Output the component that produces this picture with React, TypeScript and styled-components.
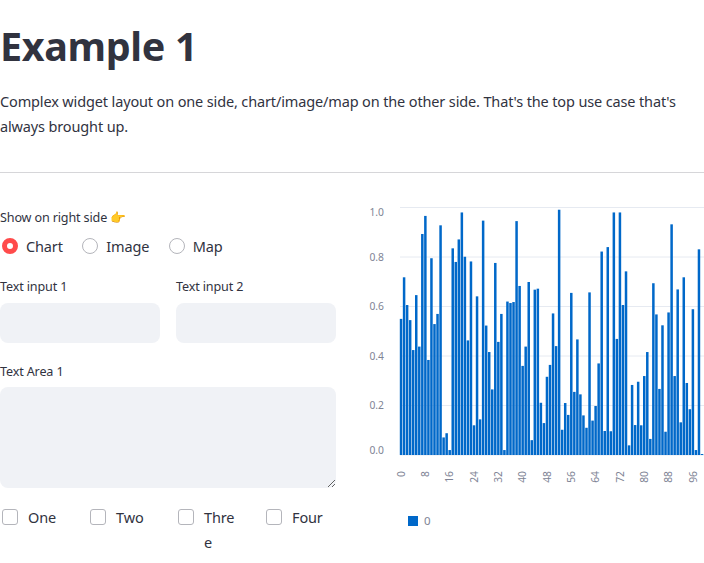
import React from "react";
import styled, { createGlobalStyle } from "styled-components";

const GlobalStyle = createGlobalStyle`
  html, body {
    margin: 0;
    padding: 0;
    background: #ffffff;
    overflow: hidden;
  }
  body {
    font-family: "Noto Sans", "Liberation Sans", sans-serif;
    color: #31333f;
  }
`;

const Page = styled.div`
  width: 704px;
  height: 563px;
`;

const Title = styled.h1`
  margin: 0;
  padding-top: 20px;
  font-size: 39.5px;
  line-height: 52px;
  font-weight: 700;
  letter-spacing: -0.35px;
`;

const Intro = styled.p`
  margin: 17px 0 0;
  font-size: 14.5px;
  line-height: 25px;
  letter-spacing: -0.14px;
`;

const Divider = styled.hr`
  margin: 33px 0 0;
  border: none;
  height: 1px;
  background: #d6d6d9;
`;

const Columns = styled.div`
  display: grid;
  grid-template-columns: 336px 336px;
  column-gap: 32px;
`;

const FormColumn = styled.div`
  display: flex;
  flex-direction: column;
  padding-top: 36px;
`;

const ChartColumn = styled.div`
  padding-top: 22px;
`;

const FieldLabel = styled.div`
  font-size: 12.6px;
  line-height: 18px;
  letter-spacing: -0.15px;
`;

const RadioRow = styled.div`
  display: flex;
  gap: 19.5px;
  margin-top: 7px;
  height: 24px;
  align-items: center;
  padding-left: 2px;
`;

const RadioItem = styled.div`
  display: flex;
  align-items: center;
  gap: 8px;
  font-size: 14.5px;
  letter-spacing: -0.14px;
`;

const RadioDot = styled.span<{ $on?: boolean }>`
  box-sizing: border-box;
  width: 16px;
  height: 16px;
  border-radius: 50%;
  background: #ffffff;
  border: ${(p) => (p.$on ? "5px solid #ff4b4b" : "1px solid #b4b5bb")};
`;

const InputRow = styled.div`
  display: grid;
  grid-template-columns: 160px 160px;
  column-gap: 16px;
  margin-top: 20px;
`;

const InputBox = styled.input`
  display: block;
  box-sizing: border-box;
  width: 100%;
  height: 40px;
  margin-top: 7px;
  border: none;
  border-radius: 8px;
  background: #f0f2f6;
  outline: none;
`;

const AreaLabel = styled(FieldLabel)`
  margin-top: 20px;
`;

const AreaBox = styled.textarea`
  display: block;
  box-sizing: border-box;
  width: 336px;
  height: 101px;
  margin: 6px 0 0;
  border: none;
  border-radius: 8px;
  background: #f0f2f6;
  outline: none;
  resize: vertical;
`;

const CheckRow = styled.div`
  display: grid;
  grid-template-columns: repeat(4, 72px);
  column-gap: 16px;
  margin-top: 17px;
  padding-left: 2px;
`;

const CheckItem = styled.div`
  display: flex;
  align-items: flex-start;
  gap: 10px;
  font-size: 14.5px;
  line-height: 24.5px;
  letter-spacing: -0.14px;
`;

const CheckBox = styled.span`
  box-sizing: border-box;
  flex: none;
  width: 16px;
  height: 16px;
  margin-top: 4px;
  border: 1px solid #b4b5bb;
  border-radius: 3px;
  background: #ffffff;
`;

const CheckText = styled.span`
  width: 34px;
  overflow-wrap: anywhere;
`;

const ChartSvg = styled.svg`
  display: block;
  width: 336px;
  height: 350px;
`;

const AxisText = styled.text`
  font-family: "Noto Sans", "Liberation Sans", sans-serif;
  font-size: 10.3px;
  fill: #808495;
`;

const LegendText = styled(AxisText)`
  font-size: 11.5px;
`;

const values = [
  0.55, 0.718, 0.606, 0.545, 0.424, 0.646, 0.438, 0.893, 0.966, 0.384,
  0.795, 0.529, 0.57, 0.928, 0.071, 0.088, 0.02, 0.835, 0.78, 0.871,
  0.98, 0.801, 0.463, 0.782, 0.12, 0.641, 0.144, 0.947, 0.523, 0.416,
  0.265, 0.776, 0.457, 0.57, 0.02, 0.62, 0.614, 0.618, 0.945, 0.683,
  0.36, 0.438, 0.699, 0.06, 0.668, 0.672, 0.211, 0.129, 0.316, 0.364,
  0.572, 0.44, 0.991, 0.102, 0.21, 0.162, 0.655, 0.255, 0.467, 0.245,
  0.16, 0.11, 0.657, 0.139, 0.198, 0.37, 0.822, 0.097, 0.84, 0.096,
  0.98, 0.469, 0.98, 0.606, 0.742, 0.039, 0.283, 0.121, 0.296, 0.12,
  0.319, 0.416, 0.065, 0.694, 0.568, 0.267, 0.524, 0.094, 0.576, 0.932,
  0.319, 0.669, 0.132, 0.718, 0.291, 0.185, 0.589, 0.02, 0.831, 0.004,
];

const plotLeft = 32;
const plotTop = 12.5;
const plotHeight = 247.5;
const step = 3.04;
const y = (v: number) => plotTop + plotHeight * (1 - v);

// first and last y labels sit inside the plot, like vega's label flush
const labelY = (tick: number) => {
  if (tick === 1) return y(tick) + 8;
  if (tick === 0) return y(tick) - 1.5;
  return y(tick) + 3.5;
};

const BarChart: React.FC = () => (
  <ChartSvg viewBox="0 0 336 350">
    {[0, 0.2, 0.4, 0.6, 0.8, 1].map((tick) => (
      <g key={tick}>
        <line x1={plotLeft} x2={336} y1={y(tick)} y2={y(tick)} stroke="#e6eaf1" />
        <AxisText x={16} y={labelY(tick)} textAnchor="end">
          {tick.toFixed(1)}
        </AxisText>
      </g>
    ))}
    {values.map((v, i) => (
      <rect
        key={i}
        x={plotLeft + i * step - 0.2}
        y={y(v)}
        width={2.5}
        height={plotHeight * v}
        fill="#0068c9"
      />
    ))}
    {Array.from({ length: 13 }, (_, i) => i * 8).map((tick) => (
      <AxisText
        key={tick}
        textAnchor="end"
        transform={`translate(${plotLeft + tick * step + 4.8} 276) rotate(-90)`}
      >
        {tick}
      </AxisText>
    ))}
    <rect x={40} y={321} width={10} height={10} fill="#0068c9" />
    <LegendText x={56} y={330}>
      0
    </LegendText>
  </ChartSvg>
);

const App: React.FC = () => (
  <Page>
    <GlobalStyle />
    <Title>Example 1</Title>
    <Intro>
      Complex widget layout on one side, chart/image/map on the other side. That's the top use
      case that's always brought up.
    </Intro>
    <Divider />
    <Columns>
      <FormColumn>
        <FieldLabel>Show on right side 👉</FieldLabel>
        <RadioRow>
          <RadioItem>
            <RadioDot $on />
            Chart
          </RadioItem>
          <RadioItem>
            <RadioDot />
            Image
          </RadioItem>
          <RadioItem>
            <RadioDot />
            Map
          </RadioItem>
        </RadioRow>
        <InputRow>
          <div>
            <FieldLabel>Text input 1</FieldLabel>
            <InputBox />
          </div>
          <div>
            <FieldLabel>Text input 2</FieldLabel>
            <InputBox />
          </div>
        </InputRow>
        <AreaLabel>Text Area 1</AreaLabel>
        <AreaBox />
        <CheckRow>
          {["One", "Two", "Three", "Four"].map((name) => (
            <CheckItem key={name}>
              <CheckBox />
              <CheckText>{name}</CheckText>
            </CheckItem>
          ))}
        </CheckRow>
      </FormColumn>
      <ChartColumn>
        <BarChart />
      </ChartColumn>
    </Columns>
  </Page>
);

export default App;
